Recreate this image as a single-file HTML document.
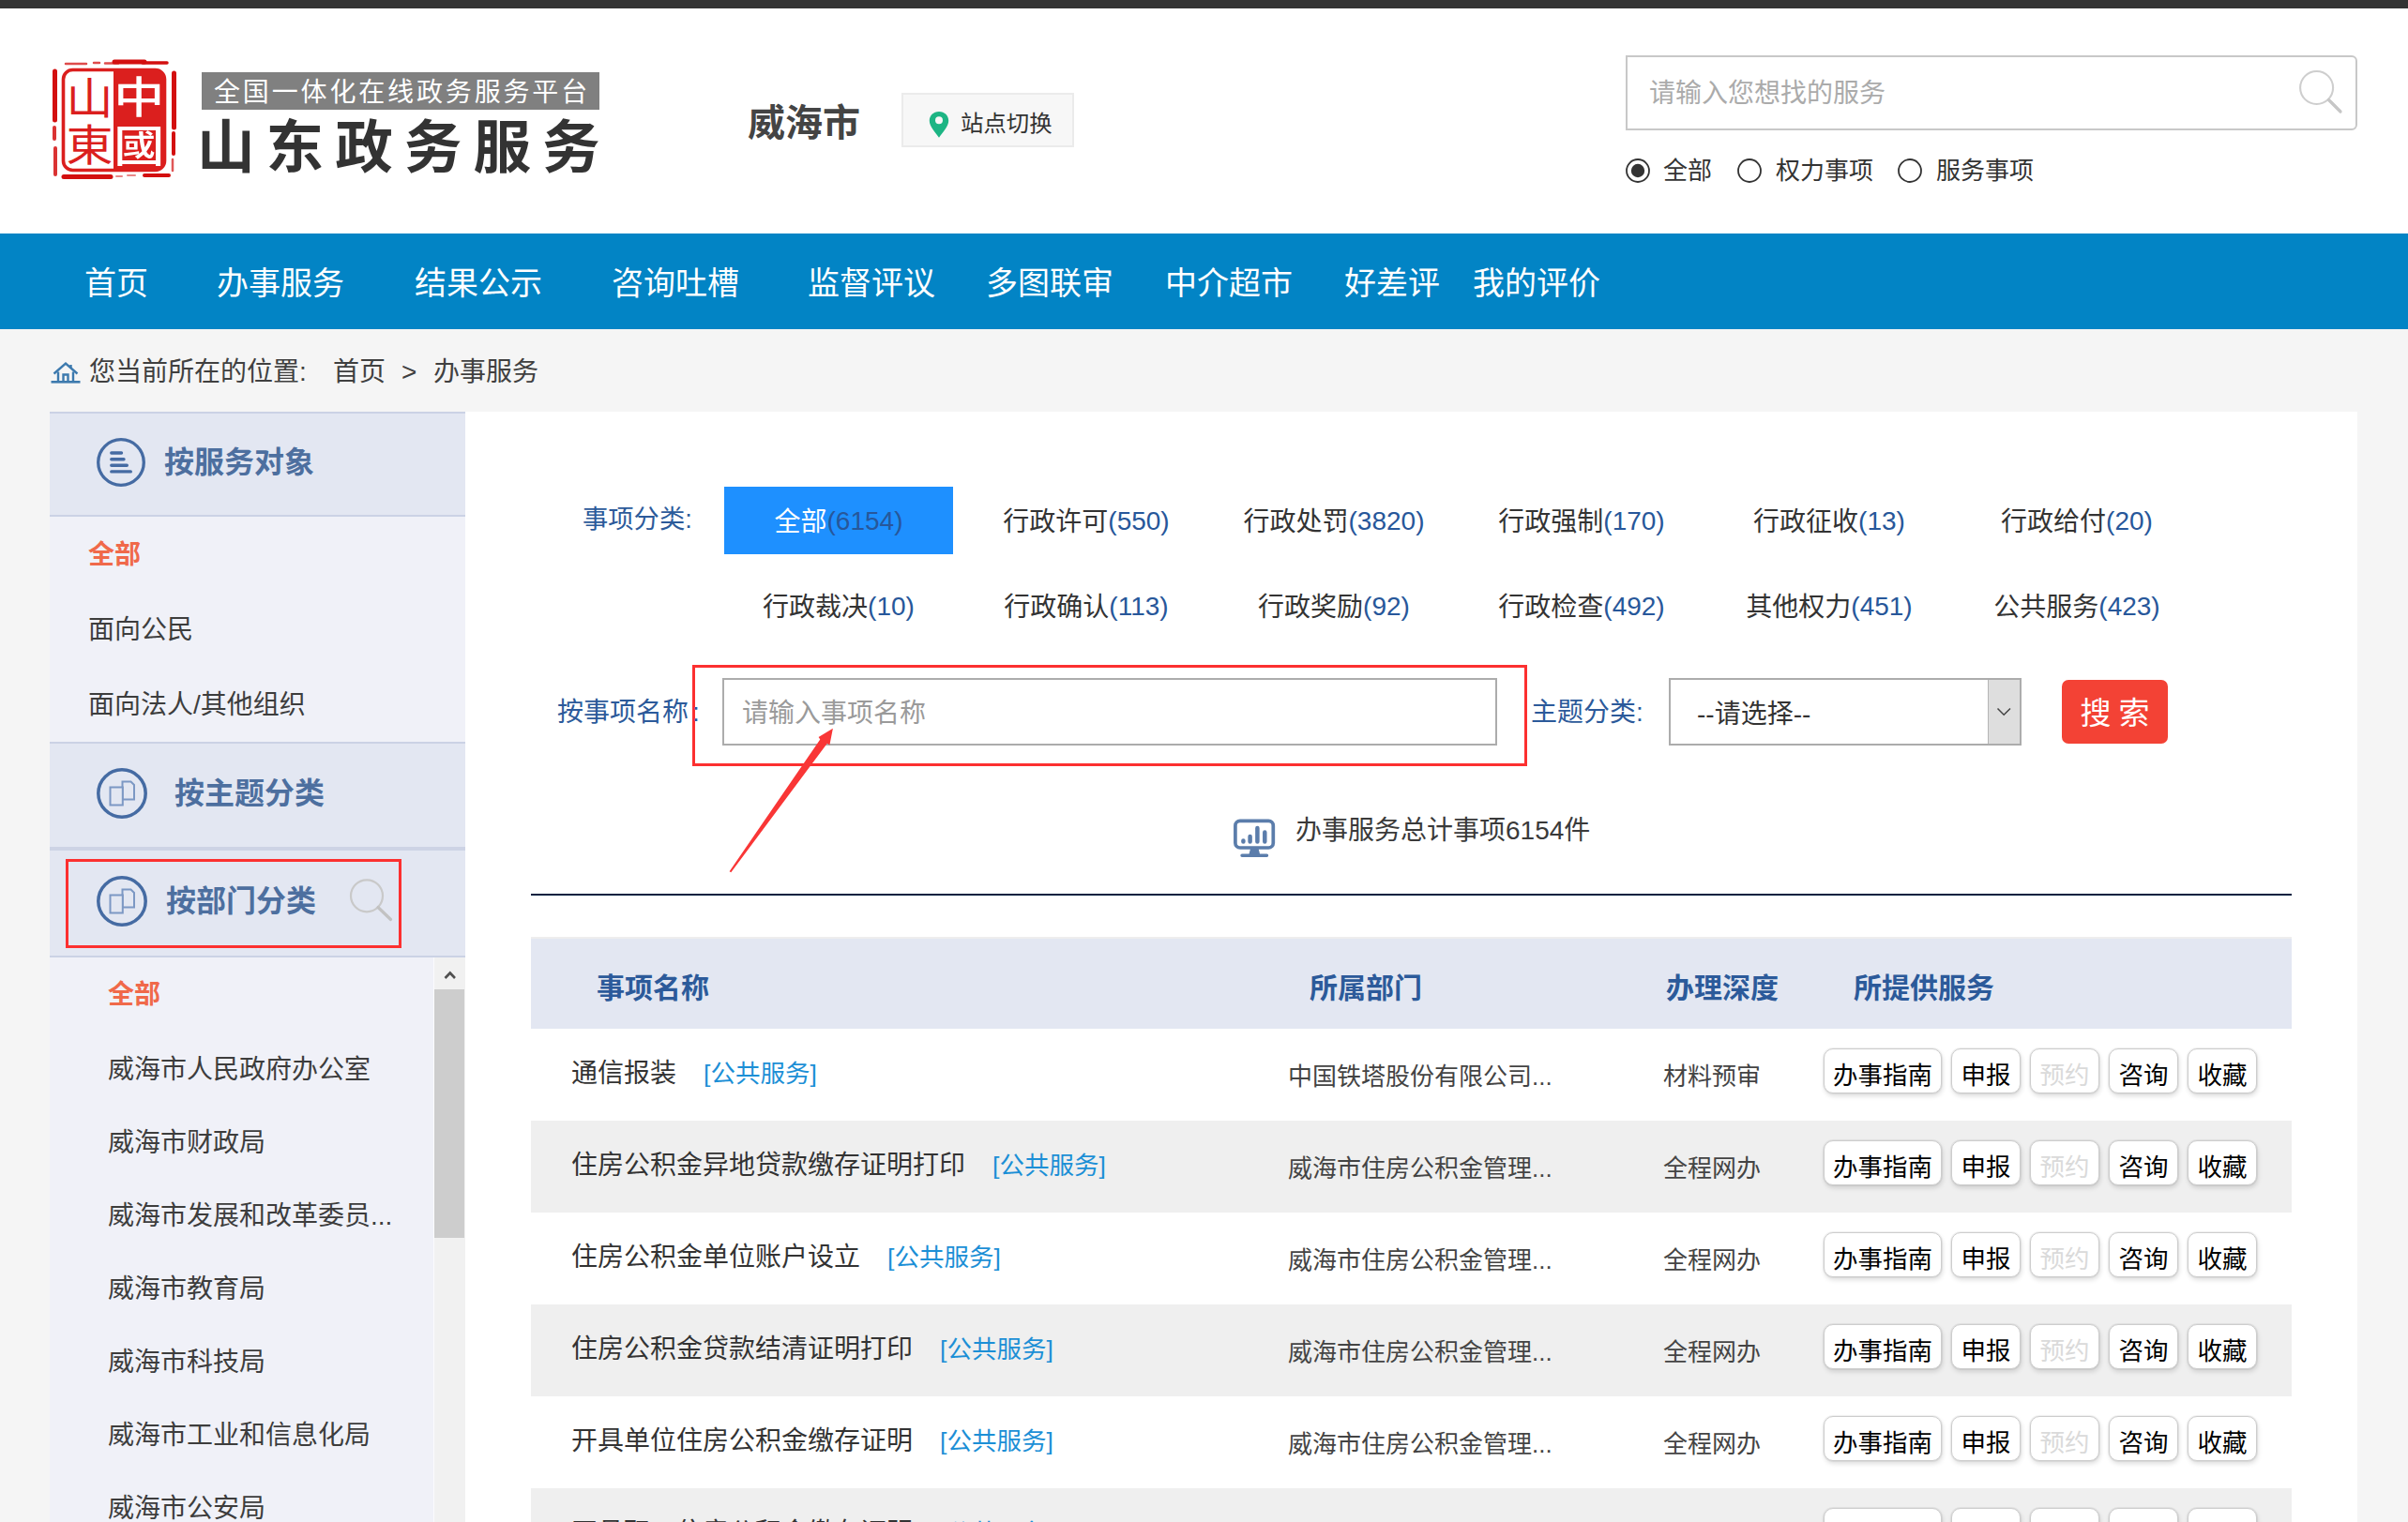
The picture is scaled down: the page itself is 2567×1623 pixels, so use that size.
<!DOCTYPE html>
<html lang="zh-CN">
<head>
<meta charset="utf-8">
<title>山东政务服务 - 威海市 - 办事服务</title>
<style>
*{box-sizing:border-box;margin:0;padding:0}
html,body{width:2567px;height:1623px;overflow:hidden;background:#f5f5f5}
body{position:relative;font-family:"Liberation Sans","Noto Sans CJK SC",sans-serif;color:#333;font-size:28px}
.a{position:absolute;white-space:nowrap}
.t{position:absolute;white-space:nowrap;line-height:40px;height:40px;margin-top:2px}
.b{font-weight:bold}
/* header */
#topbar{left:0;top:0;width:2567px;height:9px;background:#333}
#head{left:0;top:9px;width:2567px;height:240px;background:#fff}
#nav{left:0;top:249px;width:2567px;height:102px;background:#0284c5}
#nav .t{color:#fff;font-size:34px;line-height:50px;height:50px;top:26px}
/* sidebar */
.sh{left:53px;width:443px;background:#e3e7f2}
.sl{left:53px;width:443px;background:#f0f1f8}
.stitle{font-size:32px;font-weight:bold;color:#4d6f9f;line-height:44px;height:44px}
.sitem{font-size:28px;color:#3d3d3d}
.son{font-size:28px;font-weight:bold;color:#f0694a}
/* main */
#main{left:496px;top:439px;width:2017px;height:1184px;background:#fff}
.cat{font-size:28px;color:#333;width:244px;text-align:center;line-height:72px;height:72px;margin-top:0;padding-top:2px}
.cat i{font-style:normal;color:#27579a;position:relative;top:-1px}
.lab{font-size:28px;color:#2c5a9a}
.th{font-size:30px;font-weight:bold;color:#2c5a9a;line-height:44px;height:44px}
.row{left:566px;width:1877px;height:98px}
.row.g{background:#efefef}
.nm{font-size:28px;color:#333;left:609px}
.nm span{font-size:26.5px;color:#1c8fd6;margin-left:29px}
.dp{font-size:26px;color:#444;left:1373px}
.dg{font-size:26px;color:#444;left:1773px}
.btn{position:absolute;height:48px;line-height:57px;border:1px solid #cdcdcd;border-radius:10px;background:#fff;font-size:26.5px;color:#000;text-align:center;box-shadow:0 0 0 1px rgba(0,0,0,.05),1px 3px 5px rgba(0,0,0,.13);white-space:nowrap}
.btn.d{color:#dadada}
</style>
</head>
<body>
<div class="a" id="topbar"></div>
<div class="a" id="head"></div>
<svg class="a" style="left:50px;top:56px" width="144" height="140" viewBox="50 56 144 140">
<g fill="none" stroke="#d30f0f" stroke-linecap="round">
<path d="M70 68 h22 M100 67 h6 M112 67.5 h14" stroke-width="2.5" opacity=".75"/>
<path d="M122 66 h32" stroke-width="5"/><path d="M152 67 h26" stroke-width="3.5"/>
<path d="M58.5 76 v52" stroke-width="5"/><path d="M58 136 v12 M59 158 v28" stroke-width="4" opacity=".85"/>
<path d="M185.5 78 v58" stroke-width="5"/><path d="M185 142 v22" stroke-width="4"/><path d="M184 170 v12" stroke-width="2.5" opacity=".7"/>
<path d="M68 188.5 h50" stroke-width="5"/><path d="M124 188 h6 M136 187 h8" stroke-width="2" opacity=".5"/><path d="M154 187 h26" stroke-width="4"/>
</g>
<rect x="67.5" y="74.500" width="108" height="107" rx="10" fill="#fff" stroke="#db1f1e" stroke-width="3.6"/>
<path d="M121 74.500 h44.500 a10 10 0 0 1 10 10 v87 a10 10 0 0 1 -10 10 h-44.500 z" fill="#db1f1e"/>
<g font-family="'Liberation Sans','Noto Sans CJK SC',sans-serif" font-size="46" text-anchor="middle">
<text x="95.500" y="120.500" fill="#db1f1e" font-weight="400" textLength="50" lengthAdjust="spacingAndGlyphs">山</text>
<text x="95.500" y="170.500" fill="#db1f1e" font-weight="400" textLength="50" lengthAdjust="spacingAndGlyphs">東</text>
<text x="148.300" y="119.500" fill="#fff" font-weight="500" textLength="54" lengthAdjust="spacingAndGlyphs">中</text>
<text x="148.300" y="171.500" fill="#fff" font-weight="500" textLength="54" lengthAdjust="spacingAndGlyphs">國</text>
</g></svg>
<div class="a" style="left:215px;top:77px;width:424px;height:40px;background:#808080"></div>
<div class="t" style="left:228px;top:77px;font-size:28px;color:#fff;letter-spacing:2.85px">全国一体化在线政务服务平台</div>
<div class="t b" style="left:210px;top:118px;font-size:61.6px;line-height:76px;height:76px;color:#333;letter-spacing:12px">山东政务服务</div>
<div class="t b" style="left:797px;top:104px;font-size:40px;line-height:50px;height:50px;color:#444">威海市</div>
<div class="a" style="left:961px;top:99px;width:184px;height:58px;background:#f7f7f7;border:2px solid #ebebeb"></div>
<svg class="a" style="left:990px;top:118px" width="24" height="30" viewBox="0 0 24 30"><path d="M11 1 C5 1 0.800 5.400 0.800 10.800 C0.800 17 6.800 22.800 11 28.800 C15.200 22.800 21.200 17 21.200 10.800 C21.200 5.400 17 1 11 1 Z" fill="#1db584"/><circle cx="11" cy="10.200" r="4" fill="#f7f7f7"/></svg>
<div class="t" style="left:1024px;top:110px;font-size:24.4px;color:#333">站点切换</div>
<div class="a" style="left:1733px;top:59px;width:780px;height:80px;background:#fff;border:2px solid #c8c8c8;border-radius:0 6px 6px 0"></div>
<div class="t" style="left:1758px;top:78px;font-size:28px;color:#ababab">请输入您想找的服务</div>
<svg class="a" style="left:2446px;top:70px" width="56" height="56" viewBox="2446 70 56 56"><circle cx="2469.600" cy="93.500" r="17.500" fill="none" stroke="#cecece" stroke-width="2.100"/><path d="M2482.500 106.500 L2495 119" stroke="#c6c6c6" stroke-width="3.300" stroke-linecap="round"/></svg>
<svg class="a" style="left:1732px;top:168px" width="28" height="28" viewBox="0 0 28 28"><circle cx="14" cy="14" r="12" fill="#fff" stroke="#333" stroke-width="1.800"/><circle cx="14" cy="14" r="7.200" fill="#333"/></svg>
<div class="t" style="left:1773px;top:160px;font-size:26px;color:#333">全部</div>
<svg class="a" style="left:1851px;top:168px" width="28" height="28" viewBox="0 0 28 28"><circle cx="14" cy="14" r="12" fill="#fff" stroke="#333" stroke-width="1.800"/></svg>
<div class="t" style="left:1893px;top:160px;font-size:26px;color:#333">权力事项</div>
<svg class="a" style="left:2022px;top:168px" width="28" height="28" viewBox="0 0 28 28"><circle cx="14" cy="14" r="12" fill="#fff" stroke="#333" stroke-width="1.800"/></svg>
<div class="t" style="left:2064px;top:160px;font-size:26px;color:#333">服务事项</div>
<div class="a" id="nav"><div class="t" style="left:90px">首页</div><div class="t" style="left:231px">办事服务</div><div class="t" style="left:442px">结果公示</div><div class="t" style="left:652px">咨询吐槽</div><div class="t" style="left:861px">监督评议</div><div class="t" style="left:1051px">多图联审</div><div class="t" style="left:1242px">中介超市</div><div class="t" style="left:1433px">好差评</div><div class="t" style="left:1570px">我的评价</div></div>
<svg class="a" style="left:53px;top:384px" width="34" height="26" viewBox="0 0 34 26"><g fill="none" stroke="#3d7aae" stroke-width="2.400" stroke-linejoin="miter"><path d="M4.500 14.500 L17 3.500 L29.500 14.500"/><path d="M9 12.500 V22 M25 12.500 V22 M22.500 5 V9"/><path d="M14.500 22 V15.500 H19.500 V22"/><path d="M1.500 23.300 H32.500" stroke-width="2.600"/></g></svg>
<div class="t" style="left:95px;top:375px;font-size:28px;color:#404040">您当前所在的位置:</div>
<div class="t" style="left:355px;top:375px;font-size:28px;color:#404040">首页</div>
<div class="t" style="left:428px;top:375px;font-size:28px;color:#404040">&gt;</div>
<div class="t" style="left:462px;top:375px;font-size:28px;color:#404040">办事服务</div>
<div class="a sh" style="top:439px;height:112px;border-top:2px solid #cbd2e5;border-bottom:2px solid #cbd2e5"></div>
<div class="a sl" style="top:551px;height:240px"></div>
<div class="a sh" style="top:791px;height:112px;border-top:2px solid #cbd2e5"></div>
<div class="a" style="left:53px;top:903px;width:443px;height:4px;background:#cdd3e5"></div>
<div class="a sh" style="top:907px;height:114px;border-bottom:2px solid #cbd2e5"></div>
<div class="a sl" style="top:1021px;height:602px"></div>
<svg class="a" style="left:99px;top:463px" width="60" height="60" viewBox="-30 -30 60 60"><circle cx="0" cy="0" r="24.300" fill="none" stroke="#456ba3" stroke-width="3.300"/><g stroke="#456ba3" stroke-width="3.400" stroke-linecap="round"><path d="M-10.200 -10 H0.500 M-10.200 -3.300 H3 M-10.200 3.300 H6.300 M-10.200 9.900 H10.300"/></g></svg>
<svg class="a" style="left:100px;top:816px" width="60" height="60" viewBox="-30 -30 60 60"><circle cx="0" cy="0" r="25.200" fill="none" stroke="#456ba3" stroke-width="3.500"/><g fill="#e3e7f2" stroke="#7c98c4" stroke-width="2"><path d="M0.500 -12.500 H9.500 L13 -9 V6.500 H0.500 Z"/><path d="M-12.500 -6.500 H0.800 V12.500 H-12.500 Z"/></g></svg>
<svg class="a" style="left:100px;top:930.7px" width="60" height="60" viewBox="-30 -30 60 60"><circle cx="0" cy="0" r="25.200" fill="none" stroke="#456ba3" stroke-width="3.500"/><g fill="#e3e7f2" stroke="#7c98c4" stroke-width="2"><path d="M0.500 -12.500 H9.500 L13 -9 V6.500 H0.500 Z"/><path d="M-12.500 -6.500 H0.800 V12.500 H-12.500 Z"/></g></svg>
<div class="t stitle" style="left:175px;top:469px">按服务对象</div>
<div class="t stitle" style="left:186px;top:822px">按主题分类</div>
<div class="t stitle" style="left:177px;top:937px">按部门分类</div>
<svg class="a" style="left:366px;top:930px" width="60" height="60" viewBox="366 930 60 60"><circle cx="391" cy="955.300" r="17" fill="none" stroke="#c9c9c9" stroke-width="2.200"/><path d="M403 967.500 L416.500 980.500" stroke="#c2c2c2" stroke-width="3.200" stroke-linecap="round"/></svg>
<div class="a" style="left:70px;top:916px;width:358px;height:95px;border:3px solid #fc3030"></div>
<div class="t son" style="left:94px;top:570px">全部</div>
<div class="t sitem" style="left:94px;top:650px">面向公民</div>
<div class="t sitem" style="left:94px;top:730px">面向法人/其他组织</div>
<div class="t son" style="left:115px;top:1039px">全部</div>
<div class="t sitem" style="left:115px;top:1119px">威海市人民政府办公室</div>
<div class="t sitem" style="left:115px;top:1197px">威海市财政局</div>
<div class="t sitem" style="left:115px;top:1275px">威海市发展和改革委员...</div>
<div class="t sitem" style="left:115px;top:1353px">威海市教育局</div>
<div class="t sitem" style="left:115px;top:1431px">威海市科技局</div>
<div class="t sitem" style="left:115px;top:1509px">威海市工业和信息化局</div>
<div class="t sitem" style="left:115px;top:1587px">威海市公安局</div>
<div class="a" style="left:462px;top:1021px;width:34px;height:602px;background:#f1f1f1;border-left:1px solid #fbfbfd"></div>
<div class="a" style="left:463px;top:1055px;width:32px;height:265px;background:#cdcdcd"></div>
<svg class="a" style="left:463px;top:1021px" width="33" height="34" viewBox="0 0 33 34"><path d="M11.500 22 L16.800 16.500 L22 22" fill="none" stroke="#505050" stroke-width="2.600"/></svg>
<div class="a" id="main"></div>
<div class="t" style="left:621px;top:532px;font-size:27.3px;color:#2c5a9a">事项分类:</div>
<div class="t cat" style="left:772px;top:519px;background:#1e90ff;color:#fff">全部<i>(6154)</i></div>
<div class="t cat" style="left:1036px;top:519px">行政许可<i>(550)</i></div>
<div class="t cat" style="left:1300px;top:519px">行政处罚<i>(3820)</i></div>
<div class="t cat" style="left:1564px;top:519px">行政强制<i>(170)</i></div>
<div class="t cat" style="left:1828px;top:519px">行政征收<i>(13)</i></div>
<div class="t cat" style="left:2092px;top:519px">行政给付<i>(20)</i></div>
<div class="t cat" style="left:772px;top:610px">行政裁决<i>(10)</i></div>
<div class="t cat" style="left:1036px;top:610px">行政确认<i>(113)</i></div>
<div class="t cat" style="left:1300px;top:610px">行政奖励<i>(92)</i></div>
<div class="t cat" style="left:1564px;top:610px">行政检查<i>(492)</i></div>
<div class="t cat" style="left:1828px;top:610px">其他权力<i>(451)</i></div>
<div class="t cat" style="left:2092px;top:610px">公共服务<i>(423)</i></div>
<div class="t lab" style="left:594px;top:738px">按事项名称</div>
<div class="a" style="left:770px;top:723px;width:826px;height:72px;background:#fff;border:2px solid #acacac"></div>
<div class="t" style="left:791px;top:739px;font-size:28px;color:#9a9a9a">请输入事项名称</div>
<div class="a" style="left:738px;top:709px;width:890px;height:108px;border:3px solid #fc3030"></div>
<div class="t lab" style="left:738px;top:738px">:</div>
<div class="t lab" style="left:1632px;top:738px">主题分类:</div>
<div class="a" style="left:1779px;top:723px;width:376px;height:72px;background:#fff;border:2px solid #acacac"></div>
<div class="a" style="left:2119px;top:725px;width:34px;height:68px;background:#dedede;border-left:1px solid #b5b5b5"></div>
<svg class="a" style="left:2119px;top:725px" width="34" height="68" viewBox="0 0 34 68"><path d="M10.500 30.500 L17.200 37.200 L24 30.500" fill="none" stroke="#444" stroke-width="1.500"/></svg>
<div class="t" style="left:1809px;top:740px;font-size:28px;color:#333">--请选择--</div>
<div class="a" style="left:2198px;top:725px;width:113px;height:68px;background:#f34235;border-radius:7px"></div>
<div class="t" style="left:2198px;top:736px;width:113px;text-align:center;font-size:33px;line-height:46px;height:46px;color:#fff;word-spacing:-1px">搜 索</div>
<svg class="a" style="left:770px;top:770px" width="130" height="170" viewBox="770 770 130 170"><path d="M777.600 929.300 L874.300 788.600 L872.600 786 L887.900 776.800 L884.400 794.600 L881.800 792.700 L779.300 930.200 Z" fill="#f93636"/></svg>
<svg class="a" style="left:1310px;top:870px" width="54" height="48" viewBox="1310 870 54 48"><rect x="1316.900" y="875.400" width="40.400" height="28.600" rx="5" fill="#fff" stroke="#5b7dab" stroke-width="3.700"/>
<g stroke="#5b7dab" stroke-width="4.500" stroke-linecap="round"><path d="M1325.400 896.400 V897.400 M1332.600 892 V897.400 M1340.400 883 V897.400 M1348.300 887.600 V897.400"/></g>
<path d="M1333 905 H1341.600 L1343 910.500 H1350.500 a1.700 1.700 0 0 1 0 3.400 H1324 a1.700 1.700 0 0 1 0 -3.400 H1331.600 Z" fill="#5b7dab"/></svg>
<div class="t" style="left:1381px;top:864px;font-size:28px;color:#3a3a3a">办事服务总计事项6154件</div>
<div class="a" style="left:566px;top:953px;width:1877px;height:2px;background:#04213f"></div>
<div class="a" style="left:566px;top:999px;width:1877px;height:98px;background:#e3e7f2;border-top:2px solid #eee"></div>
<div class="t th" style="left:636px;top:1030px">事项名称</div>
<div class="t th" style="left:1396px;top:1030px">所属部门</div>
<div class="t th" style="left:1776px;top:1030px">办理深度</div>
<div class="t th" style="left:1976px;top:1030px">所提供服务</div>
<div class="a row" style="top:1097px"><div class="t nm" style="left:43px;top:26px">通信报装<span>[公共服务]</span></div><div class="t dp" style="left:807px;top:29px">中国铁塔股份有限公司...</div><div class="t dg" style="left:1207px;top:29px">材料预审</div><div class="btn" style="left:1378px;top:21px;width:126px">办事指南</div><div class="btn" style="left:1514px;top:21px;width:74px">申报</div><div class="btn d" style="left:1598px;top:21px;width:74px">预约</div><div class="btn" style="left:1682px;top:21px;width:74px">咨询</div><div class="btn" style="left:1766px;top:21px;width:74px">收藏</div></div>
<div class="a row g" style="top:1195px"><div class="t nm" style="left:43px;top:26px">住房公积金异地贷款缴存证明打印<span>[公共服务]</span></div><div class="t dp" style="left:807px;top:29px">威海市住房公积金管理...</div><div class="t dg" style="left:1207px;top:29px">全程网办</div><div class="btn" style="left:1378px;top:21px;width:126px">办事指南</div><div class="btn" style="left:1514px;top:21px;width:74px">申报</div><div class="btn d" style="left:1598px;top:21px;width:74px">预约</div><div class="btn" style="left:1682px;top:21px;width:74px">咨询</div><div class="btn" style="left:1766px;top:21px;width:74px">收藏</div></div>
<div class="a row" style="top:1293px"><div class="t nm" style="left:43px;top:26px">住房公积金单位账户设立<span>[公共服务]</span></div><div class="t dp" style="left:807px;top:29px">威海市住房公积金管理...</div><div class="t dg" style="left:1207px;top:29px">全程网办</div><div class="btn" style="left:1378px;top:21px;width:126px">办事指南</div><div class="btn" style="left:1514px;top:21px;width:74px">申报</div><div class="btn d" style="left:1598px;top:21px;width:74px">预约</div><div class="btn" style="left:1682px;top:21px;width:74px">咨询</div><div class="btn" style="left:1766px;top:21px;width:74px">收藏</div></div>
<div class="a row g" style="top:1391px"><div class="t nm" style="left:43px;top:26px">住房公积金贷款结清证明打印<span>[公共服务]</span></div><div class="t dp" style="left:807px;top:29px">威海市住房公积金管理...</div><div class="t dg" style="left:1207px;top:29px">全程网办</div><div class="btn" style="left:1378px;top:21px;width:126px">办事指南</div><div class="btn" style="left:1514px;top:21px;width:74px">申报</div><div class="btn d" style="left:1598px;top:21px;width:74px">预约</div><div class="btn" style="left:1682px;top:21px;width:74px">咨询</div><div class="btn" style="left:1766px;top:21px;width:74px">收藏</div></div>
<div class="a row" style="top:1489px"><div class="t nm" style="left:43px;top:26px">开具单位住房公积金缴存证明<span>[公共服务]</span></div><div class="t dp" style="left:807px;top:29px">威海市住房公积金管理...</div><div class="t dg" style="left:1207px;top:29px">全程网办</div><div class="btn" style="left:1378px;top:21px;width:126px">办事指南</div><div class="btn" style="left:1514px;top:21px;width:74px">申报</div><div class="btn d" style="left:1598px;top:21px;width:74px">预约</div><div class="btn" style="left:1682px;top:21px;width:74px">咨询</div><div class="btn" style="left:1766px;top:21px;width:74px">收藏</div></div>
<div class="a row g" style="top:1587px"><div class="t nm" style="left:43px;top:26px">开具职工住房公积金缴存证明<span>[公共服务]</span></div><div class="t dp" style="left:807px;top:29px">威海市住房公积金管理...</div><div class="t dg" style="left:1207px;top:29px">全程网办</div><div class="btn" style="left:1378px;top:21px;width:126px">办事指南</div><div class="btn" style="left:1514px;top:21px;width:74px">申报</div><div class="btn d" style="left:1598px;top:21px;width:74px">预约</div><div class="btn" style="left:1682px;top:21px;width:74px">咨询</div><div class="btn" style="left:1766px;top:21px;width:74px">收藏</div></div>
</body>
</html>
